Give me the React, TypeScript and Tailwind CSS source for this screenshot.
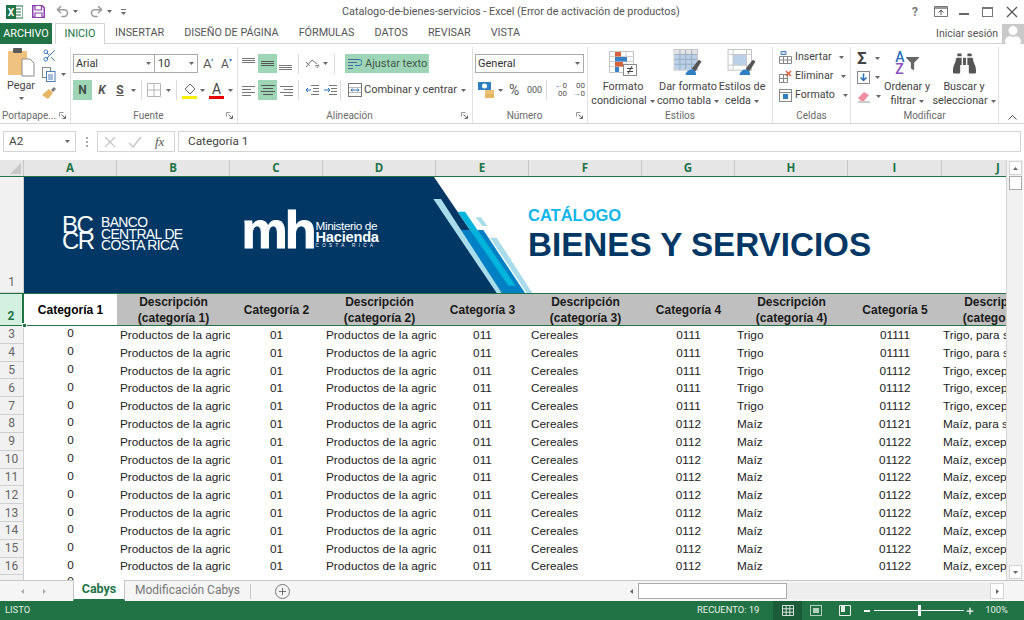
import React from "react";
import { Undo2, Redo2, Scissors, Plus } from "lucide-react";
import { FaBinoculars, FaFilter, FaUser } from "react-icons/fa";

const GRID =
  "grid grid-cols-[24px_93px_113px_93px_113px_93px_113px_93px_113px_94px_113px]";

const Caret = ({ className = "" }: { className?: string }) => (
  <svg width="5" height="3" viewBox="0 0 5 3" className={className}>
    <path d="M0 0h5L2.5 3z" fill="#666" />
  </svg>
);

const Launcher = () => (
  <svg width="7" height="7" viewBox="0 0 7 7">
    <path d="M0.5 0.5h4M0.5 0.5v4" stroke="#999" fill="none" />
    <path d="M2.5 2.5l3.5 3.5M6.5 3.5v3h-3" stroke="#666" fill="none" />
  </svg>
);

const Lines = ({
  w,
  y = [2, 6, 10],
  color = "#777",
}: {
  w: [number, number][];
  y?: number[];
  color?: string;
}) => (
  <svg width="16" height="14" viewBox="0 0 16 14">
    {w.map((l, i) => (
      <rect key={i} x={l[0]} y={y[i]} width={l[1]} height="1" fill={color} />
    ))}
  </svg>
);

const Sep = ({ h = "h-[20px]" }: { h?: string }) => (
  <div className={`w-px bg-[#dcdcdc] ${h}`} />
);

const Group = ({
  label,
  width,
  launcher,
  children,
  labelClass = "",
}: {
  label: string;
  width: string;
  launcher?: boolean;
  children: React.ReactNode;
  labelClass?: string;
}) => (
  <div className={`${width} h-[76px] flex flex-col border-r border-[#e1e1e1] shrink-0`}>
    <div className="h-[61px] shrink-0 flex">{children}</div>
    <div className="flex items-center h-[15px]">
      <div className={`flex-1 text-center text-[10px] text-[#6a6a6a] leading-[15px] whitespace-nowrap ${labelClass}`}>
        {label}
      </div>
      {launcher && (
        <div className="pr-[4px] flex items-center">
          <Launcher />
        </div>
      )}
    </div>
  </div>
);

const BigButton = ({
  icon,
  l1,
  l2,
  width,
}: {
  icon: React.ReactNode;
  l1: string;
  l2: string;
  width: string;
}) => (
  <div className={`${width} flex flex-col items-center shrink-0`}>
    <div className="h-[24px] flex items-end justify-center">{icon}</div>
    <div className="text-[10.8px] leading-[14px] text-[#444] mt-[4px] whitespace-nowrap">{l1}</div>
    <div className="text-[10.8px] leading-[14px] text-[#444] whitespace-nowrap flex items-center gap-[3px]">
      {l2}
      <Caret />
    </div>
  </div>
);

const Brush = () => (
  <g>
    <path d="M20 22l8-10 3 2-7 11z" fill="#555" />
    <path d="M13 29c1-5 5-7 9-6 2 1 3 3 3 6z" fill="#2f7fc4" />
  </g>
);

const CondIcon = () => (
  <svg width="28" height="25" viewBox="0 0 28 25" className="shrink-0">
    <rect x="0.5" y="0.5" width="24" height="21" fill="#fff" stroke="#c4c4c4" />
    <path d="M9 1v21M17 1v21M1 5.5h24M1 10.5h24M1 15.5h24" stroke="#d0d0d0" />
    <rect x="6" y="1" width="6" height="4.5" fill="#d9603a" />
    <rect x="6" y="6" width="12" height="4.5" fill="#3a82c6" />
    <rect x="6" y="11" width="8" height="4.5" fill="#d9603a" />
    <rect x="6" y="16" width="4" height="5" fill="#3a82c6" />
    <rect x="14.5" y="13.5" width="13" height="11" fill="#fff" stroke="#8a8a8a" />
    <path d="M18 17.5h6M18 20.5h6M19 23l4-8" stroke="#444" fill="none" />
  </svg>
);

const TableIcon = () => (
  <svg width="30" height="27" viewBox="0 0 32 30" className="shrink-0">
    <rect x="0.5" y="0.5" width="26" height="23" fill="#fff" stroke="#bdbdbd" />
    <rect x="1" y="6" width="25" height="17" fill="#b9d0e8" />
    <rect x="1" y="1" width="25" height="5" fill="#e4e4e4" />
    <path d="M7 1v22M13.5 1v22M20 1v22M1 6h25M1 11.5h25M1 17h25" stroke="#98a9ba" />
    <Brush />
  </svg>
);

const StyleIcon = () => (
  <svg width="30" height="27" viewBox="0 0 32 30" className="shrink-0">
    <rect x="0.5" y="0.5" width="26" height="23" fill="#fff" stroke="#bdbdbd" />
    <rect x="6" y="6" width="15" height="12" fill="#b9d0e8" />
    <path d="M6 1v22M21 1v22M1 6h25M1 18h25" stroke="#c4c4c4" />
    <Brush />
  </svg>
);

const FontStep = ({ up, size }: { up?: boolean; size: string }) => (
  <div className="w-[11px] flex items-start">
    <span className={`${size} leading-none`}>A</span>
    <svg width="4" height="3" viewBox="0 0 4 3" className="mt-[1px]">
      <path d={up ? "M0 3h4L2 0z" : "M0 0h4L2 3z"} fill="#2a70b8" />
    </svg>
  </div>
);

const Ribbon = () => (
  <div className="h-[80px] flex pt-[3px] pl-0 bg-white border-b border-[#d4d4d4] shrink-0">
    <Group label="Portapape..." width="w-[71px]" launcher labelClass="text-left pl-[2px]">
      <div className="w-[42px] flex flex-col items-center">
        <svg width="27" height="30" viewBox="0 0 27 30" className="mt-[1px] shrink-0">
          <rect x="0" y="3" width="19" height="24" rx="1" fill="#efc27f" />
          <rect x="5" y="0" width="9" height="5" rx="1" fill="#5b5b5b" />
          <path d="M14 11h8l4 4v13H14z" fill="#fff" stroke="#8d8d8d" />
        </svg>
        <div className="text-[10.8px] leading-[13px] text-[#444] mt-[1px]">Pegar</div>
        <Caret className="mt-[5px]" />
      </div>
      <div className="flex flex-col pl-[0px] pt-[1px] gap-[4px]">
        <Scissors size={15} color="#3f7ab5" strokeWidth={1.6} />
        <div className="flex items-center gap-[5px]">
          <svg width="14" height="15" viewBox="0 0 14 15">
            <rect x="0.5" y="0.5" width="8" height="10" fill="#fff" stroke="#888" />
            <rect x="4.5" y="4.5" width="8.5" height="10" fill="#fff" stroke="#4c7fb5" />
            <path d="M6 8h5M6 10h5M6 12h5" stroke="#4c7fb5" />
          </svg>
          <Caret />
        </div>
        <svg width="15" height="14" viewBox="0 0 15 14">
          <path d="M9 4l3-3 2 2-3 3z" fill="#777" />
          <path d="M0 9l7-6 4 4-5 6z" fill="#e5b561" />
        </svg>
      </div>
    </Group>

    <Group label="Fuente" width="w-[167px]" launcher>
      <div className="flex flex-col pl-[2px] pt-[7px]">
        <div className="flex items-center h-[19px]">
          <div className="w-[82px] h-[19px] border border-[#ababab] flex items-center justify-between pl-[2px] pr-[3px] text-[10.9px] text-[#333]">
            <span className="pt-[1px]">Arial</span>
            <Caret />
          </div>
          <div className="w-[43px] h-[19px] border border-l-0 border-[#ababab] flex items-center justify-between pl-[3px] pr-[3px] text-[10.9px] text-[#333]">
            <span className="pt-[1px]">10</span>
            <Caret />
          </div>
          <div className="flex items-end ml-[5px] gap-[7px] text-[#555]">
            <FontStep up size="text-[13px]" />
            <FontStep size="text-[12px]" />
          </div>
        </div>
        <div className="flex items-center h-[20px] mt-[7px] text-[#555]">
          <div className="w-[19px] h-[20px] bg-[#9fd5b7] flex items-center justify-center font-bold text-[12px] text-[#3f4f46]">N</div>
          <div className="w-[18px] ml-[1px] text-center font-bold italic text-[12px]">K</div>
          <div className="w-[18px] text-center font-bold underline text-[12px]">S</div>
          <Caret className="ml-[2px]" />
          <div className="ml-[5px]"><Sep /></div>
          <svg width="14" height="14" viewBox="0 0 14 14" className="ml-[5px]">
            <path d="M.5.5h13v13H.5zM7 .5v13M.5 7h13" stroke="#b5b5b5" fill="none" />
          </svg>
          <Caret className="ml-[5px]" />
          <div className="ml-[5px]"><Sep /></div>
          <svg width="15" height="17" viewBox="0 0 15 17" className="ml-[5px]">
            <path d="M3 7l5-5 5 5-5 5z" fill="#fff" stroke="#666" />
            <rect x="0" y="14" width="15" height="3" fill="#f7f100" />
          </svg>
          <Caret className="ml-[3px]" />
          <svg width="15" height="17" viewBox="0 0 15 17" className="ml-[4px]">
            <rect x="0" y="14" width="15" height="3" fill="#e60000" />
            <text x="7.5" y="12" textAnchor="middle" fontSize="14" fill="#444" fontFamily="Roboto">A</text>
          </svg>
          <Caret className="ml-[4px]" />
        </div>
      </div>
    </Group>

    <Group label="Alineación" width="w-[235px]" launcher>
      <div className="flex flex-col pl-[2px] pt-[7px]">
        <div className="flex items-center h-[19px]">
          <div className="w-[18px] flex justify-center">
            <Lines w={[[1, 13], [1, 13], [1, 13]]} y={[1, 3, 5]} />
          </div>
          <div className="w-[19px] h-[19px] bg-[#9fd5b7] flex items-center justify-center">
            <Lines w={[[1, 13], [1, 13], [1, 13]]} y={[4, 6, 8]} color="#555" />
          </div>
          <div className="w-[18px] flex justify-center">
            <Lines w={[[1, 13], [1, 13], [1, 13]]} y={[8, 10, 12]} />
          </div>
          <div className="ml-[3px]"><Sep /></div>
          <svg width="16" height="14" viewBox="0 0 16 14" className="ml-[5px]">
            <path d="M2 10l6-7 5 4M2 5l4 4M11 9l4-1-2 3" stroke="#777" fill="none" />
          </svg>
          <Caret className="ml-[3px]" />
          <div className="ml-[6px]"><Sep /></div>
          <div className="w-[84px] h-[19px] bg-[#9fd5b7] ml-[10px] flex items-center pl-[3px] gap-[3px] text-[11px] text-[#3f5a4a] whitespace-nowrap">
            <svg width="14" height="12" viewBox="0 0 14 12">
              <path d="M0 1.5h9M0 4.5h9M0 7.5h5M0 10.5h5" stroke="#4a6b9b" />
              <path d="M9 1.5h2a2.5 2.5 0 010 6H7" stroke="#2a70b8" fill="none" />
            </svg>
            <span className="pt-[1px]">Ajustar texto</span>
          </div>
        </div>
        <div className="flex items-center h-[20px] mt-[7px]">
          <div className="w-[18px] flex justify-center">
            <Lines w={[[1, 13], [1, 9], [1, 13], [1, 9]]} y={[3, 6, 9, 12]} />
          </div>
          <div className="w-[19px] h-[20px] bg-[#9fd5b7] flex items-center justify-center">
            <Lines w={[[1, 14], [3, 10], [1, 14], [3, 10]]} y={[2, 5, 8, 11]} color="#555" />
          </div>
          <div className="w-[18px] flex justify-center">
            <Lines w={[[2, 13], [6, 9], [2, 13], [6, 9]]} y={[3, 6, 9, 12]} />
          </div>
          <div className="ml-[3px]"><Sep /></div>
          <svg width="14" height="12" viewBox="0 0 14 12" className="ml-[6px]">
            <path d="M6 1.5h8M8 4.5h6M8 7.5h6M6 10.5h8" stroke="#777" />
            <path d="M6 6H1M3 4L1 6l2 2" stroke="#2a70b8" fill="none" />
          </svg>
          <svg width="14" height="12" viewBox="0 0 14 12" className="ml-[4px]">
            <path d="M6 1.5h8M8 4.5h6M8 7.5h6M6 10.5h8" stroke="#777" />
            <path d="M1 6h6M5 4l2 2-2 2" stroke="#2a70b8" fill="none" />
          </svg>
          <div className="ml-[3px]"><Sep /></div>
          <svg width="14" height="14" viewBox="0 0 14 14" className="ml-[7px]">
            <rect x=".5" y=".5" width="13" height="13" fill="#fff" stroke="#777" />
            <path d="M1 4.5h12M1 9.5h12" stroke="#bbb" />
            <path d="M3 7h8M4.5 5.5L3 7l1.5 1.5M9.5 5.5L11 7 9.5 8.5" stroke="#2a70b8" fill="none" />
          </svg>
          <span className="ml-[2px] w-[92px] text-[11px] text-[#444] whitespace-nowrap">Combinar y centrar</span>
          <Caret className="ml-[5px]" />
        </div>
      </div>
    </Group>

    <Group label="Número" width="w-[115px]" launcher>
      <div className="flex flex-col pl-[2px] pt-[7px]">
        <div className="w-[109px] h-[19px] border border-[#ababab] flex items-center justify-between pl-[2px] pr-[3px] text-[11px] text-[#333]">
          <span className="pt-[1px]">General</span>
          <Caret />
        </div>
        <div className="flex items-center h-[20px] mt-[7px] text-[#555]">
          <svg width="16" height="16" viewBox="0 0 16 16" className="ml-[3px]">
            <rect x="0" y="0" width="13" height="8" fill="#2f7fc4" />
            <circle cx="6.5" cy="4" r="2.5" fill="#fff" />
            <rect x="7" y="8" width="9" height="4" fill="#f0c277" />
            <rect x="7" y="12" width="9" height="4" fill="#e5b561" />
          </svg>
          <Caret className="ml-[4px]" />
          <span className="ml-[6px] w-[13px] text-[14px] leading-none">%</span>
          <span className="ml-[5px] w-[14px] text-[9px] leading-none">000</span>
          <div className="ml-[5px]"><Sep /></div>
          <div className="ml-[6px] w-[14px] text-[8px] leading-[8px] flex flex-col items-end shrink-0">
            <span><span className="text-[#2a70b8]">←</span>0</span>
            <span>00</span>
          </div>
          <div className="ml-[4px] w-[14px] text-[8px] leading-[8px] flex flex-col items-end shrink-0">
            <span>00</span>
            <span><span className="text-[#2a70b8]">→</span>0</span>
          </div>
        </div>
      </div>
    </Group>

    <Group label="Estilos" width="w-[185px]">
      <div className="flex pt-[5px]">
        <BigButton icon={<CondIcon />} l1="Formato" l2="condicional" width="w-[70px]" />
        <BigButton icon={<TableIcon />} l1="Dar formato" l2="como tabla" width="w-[60px]" />
        <BigButton icon={<StyleIcon />} l1="Estilos de" l2="celda" width="w-[48px]" />
      </div>
    </Group>

    <Group label="Celdas" width="w-[78px]">
      <div className="flex flex-col pl-[6px] pt-[3px] gap-[5px] text-[10.6px] text-[#444] leading-[14px]">
        <div className="flex items-center gap-[3px]">
          <svg width="13" height="13" viewBox="0 0 13 13">
            <path d="M.5 5.5h12v7H.5zM4.5 5.5v7M8.5 5.5v7M.5 9h12" stroke="#888" fill="#fff" />
            <path d="M2 .5h5v3H2z" fill="#cfe0f2" stroke="#4c7fb5" />
          </svg>
          Insertar
          <Caret className="ml-[5px]" />
        </div>
        <div className="flex items-center gap-[3px]">
          <svg width="13" height="13" viewBox="0 0 13 13">
            <path d="M.5 4.5h8v8h-8zM4.5 4.5v8M.5 8.5h8" stroke="#888" fill="#fff" />
            <path d="M7 1l5 5M12 1L7 6" stroke="#d9603a" strokeWidth="1.6" />
          </svg>
          Eliminar
          <Caret className="ml-[5px]" />
        </div>
        <div className="flex items-center gap-[3px]">
          <svg width="13" height="13" viewBox="0 0 13 13">
            <rect x=".5" y=".5" width="12" height="12" fill="#fff" stroke="#888" />
            <path d="M1 3.5h11" stroke="#888" />
            <rect x="4" y="5" width="5" height="5" fill="#2f7fc4" />
          </svg>
          Formato
          <Caret className="ml-[5px]" />
        </div>
      </div>
    </Group>

    <Group label="Modificar" width="w-[148px]">
      <div className="flex flex-col pl-[6px] pt-[1px] shrink-0">
        <div className="flex items-center gap-[5px] h-[20px]">
          <span className="text-[17px] leading-none text-[#444] w-[13px] font-bold">Σ</span>
          <Caret />
        </div>
        <div className="flex items-center gap-[5px] h-[19px]">
          <svg width="13" height="13" viewBox="0 0 13 13">
            <rect x=".5" y=".5" width="12" height="12" fill="#fff" stroke="#888" />
            <path d="M6.5 2.5v7M3.5 6.5l3 3 3-3" stroke="#2a70b8" strokeWidth="1.5" fill="none" />
          </svg>
          <Caret />
        </div>
        <div className="flex items-center gap-[5px] h-[19px]">
          <svg width="14" height="12" viewBox="0 0 14 12">
            <path d="M1 7l6-6 5 3-5 6H4z" fill="#ef8fa0" />
            <path d="M1 11h12" stroke="#999" />
          </svg>
          <Caret />
        </div>
      </div>
      <div className="flex pt-[5px] ml-[-1px]">
        <BigButton
          width="w-[54px]"
          l1="Ordenar y"
          l2="filtrar"
          icon={
            <div className="flex items-center gap-[1px] pb-[1px]">
              <div className="flex flex-col text-[14px] leading-[12px] font-medium">
                <span className="text-[#2a70b8]">A</span>
                <span className="text-[#8a4fc0]">Z</span>
              </div>
              <FaFilter size={13} color="#666" />
            </div>
          }
        />
        <BigButton
          width="w-[60px]"
          l1="Buscar y"
          l2="seleccionar"
          icon={<FaBinoculars size={23} color="#555" className="mb-[1px] shrink-0" />}
        />
      </div>
    </Group>
    <div className="flex-1 flex items-end justify-end pr-[7px] pb-[3px]">
      <svg width="9" height="5" viewBox="0 0 9 5">
        <path d="M.5 4.5l4-4 4 4" stroke="#555" fill="none" />
      </svg>
    </div>
  </div>
);

const ColHead = ({ c }: { c: string }) => (
  <div className="h-[16px] flex items-center justify-center border-r border-[#c6c6c6] text-[11.5px] font-bold text-[#217346] leading-none bg-[#e6e6e6] font-['Open_Sans',sans-serif]">
    {c}
  </div>
);

const HeadCell = ({ one, two, white }: { one?: string; two?: [string, string]; white?: boolean }) => (
  <div
    className={`flex flex-col items-center justify-center text-[12px] font-bold leading-[16px] text-[#1a1a1a] overflow-hidden whitespace-nowrap mb-[1px] ${
      white ? "bg-white text-black" : "bg-[#bfbfbf]"
    }`}
  >
    {one ?? (
      <>
        <span>{two![0]}</span>
        <span>{two![1]}</span>
      </>
    )}
  </div>
);

const rows = Array.from({ length: 14 }, (_, i) => {
  const n = i + 3;
  const trigo = n <= 7;
  return {
    n,
    g: trigo ? "0111" : "0112",
    h: trigo ? "Trigo" : "Maíz",
    i: n <= 4 ? "01111" : trigo ? "01112" : n === 8 ? "01121" : "01122",
    j: n <= 4 ? "Trigo, para semilla" : trigo ? "Trigo, excepto" : n === 8 ? "Maíz, para semilla" : "Maíz, excepto",
  };
});

const Desc = ({ t, pl = "pl-[3px]" }: { t: string; pl?: string }) => (
  <div className={`${pl} overflow-hidden whitespace-nowrap`}>{t}</div>
);

const Row = ({ r }: { r: (typeof rows)[number] }) => (
  <div className={`${GRID} h-[17.82px] items-center text-[11.8px] leading-[14px] text-[#222] font-['Liberation_Sans',Arial,sans-serif]`}>
    <div className="h-full flex items-center justify-center bg-[#f1f1f1] border-r border-b border-[#d0d0d0] text-[12px] text-[#666] font-['Roboto',sans-serif]">
      {r.n}
    </div>
    <div className="text-center pb-[3px]">0</div>
    <Desc t="Productos de la agric" />
    <div className="text-center">01</div>
    <Desc t="Productos de la agric" />
    <div className="text-center">011</div>
    <Desc t="Cereales" pl="pl-[2px]" />
    <div className="text-center">{r.g}</div>
    <Desc t={r.h} pl="pl-[2px]" />
    <div className="text-center">{r.i}</div>
    <Desc t={r.j} pl="pl-[1px]" />
  </div>
);

const Banner = () => (
  <div className={`${GRID} h-[116px]`}>
    <div className="flex items-end justify-center pb-[1px] bg-[#f1f1f1] border-r border-b border-[#d0d0d0] text-[12px] text-[#666]">
      1
    </div>
    <div className="col-span-10 flex overflow-hidden bg-white">
      <div className="w-[401px] shrink-0 bg-[#003764] text-white flex items-start pt-[34px] pl-[38px] font-['Liberation_Sans',Arial,sans-serif]">
        <div className="text-[24px] leading-[16px] tracking-[-1.6px] font-light mt-[6px] w-[39px]">
          <div>BC</div>
          <div>CR</div>
        </div>
        <div className="text-[13.9px] leading-[11.5px] tracking-[-0.6px] whitespace-nowrap mt-[6px]">
          <div>BANCO</div>
          <div>CENTRAL DE</div>
          <div>COSTA RICA</div>
        </div>
        <div className="ml-[59px] text-[52px] leading-[36px] font-bold tracking-[-3px] w-[74px] mt-[1px] [-webkit-text-stroke:1px_white]">mh</div>
        <div className="flex flex-col whitespace-nowrap mt-[10px]">
          <span className="text-[11.8px] leading-[11px] tracking-[-0.4px] font-light">Ministerio de</span>
          <span className="text-[14.6px] leading-[11px] font-bold tracking-[-0.2px]">Hacienda</span>
          <span className="text-[4.5px] leading-[6px] tracking-[3.4px]">COSTA RICA</span>
        </div>
      </div>
      <svg width="110" height="116" viewBox="0 6 330 348" className="shrink-0">
        <path d="M0 6h27l108 159h-35l132 189H0z" fill="#003764" />
        <path d="M100 165h75l125 189h-68z" fill="#0080c4" />
        <path d="M25 72h23l182 282h-15z" fill="#a9dcea" />
        <path d="M98 110h22l152 222h-22z" fill="#00b4dc" />
        <path d="M152 127h16l19 26h-15z" fill="#a9dcea" />
        <path d="M195 188h20l107 166h-17z" fill="#a9dcea" />
      </svg>
      <div className="ml-[-7px] pt-[29px] font-['Liberation_Sans',Arial,sans-serif] font-bold whitespace-nowrap">
        <div className="text-[16.5px] leading-[19px] text-[#10b5ea]">CATÁLOGO</div>
        <div className="text-[33.2px] leading-[40px] text-[#003764]">BIENES Y SERVICIOS</div>
      </div>
    </div>
  </div>
);

const HeaderRow = () => (
  <div className={`${GRID} h-[33px] font-['Liberation_Sans',Arial,sans-serif] border-t border-[#217346] relative`}>
    <div className="flex items-end justify-center pb-[1px] bg-[#d3f0e0] border-r-2 border-[#217346] text-[12px] font-bold text-[#217346] font-['Roboto',sans-serif]">
      2
    </div>
    <HeadCell one="Categoría 1" white />
    <HeadCell two={["Descripción", "(categoría 1)"]} />
    <HeadCell one="Categoría 2" />
    <HeadCell two={["Descripción", "(categoría 2)"]} />
    <HeadCell one="Categoría 3" />
    <HeadCell two={["Descripción", "(categoría 3)"]} />
    <HeadCell one="Categoría 4" />
    <HeadCell two={["Descripción", "(categoría 4)"]} />
    <HeadCell one="Categoría 5" />
    <HeadCell two={["Descripción", "(categoría 5)"]} />
    <div className="absolute left-0 right-0 bottom-0 h-px bg-[#217346]" />
    <div className="absolute left-[22px] bottom-[-2px] w-[5px] h-[5px] bg-[#217346] border border-white" />
  </div>
);

export default function App() {
  return (
    <div className="w-[1024px] h-[620px] overflow-hidden flex flex-col bg-white font-['Roboto',sans-serif] text-[#444]">
      {/* Title bar */}
      <div className="h-[23px] flex items-center shrink-0">
        <svg width="17" height="16" viewBox="0 0 17 16" className="ml-[6px]">
          <path d="M8 2h9v12H8z" fill="#fff" stroke="#217346" />
          <path d="M10 5h5M10 8h5M10 11h5" stroke="#217346" />
          <rect x="0" y="1" width="10" height="14" fill="#217346" />
          <text x="5" y="12" textAnchor="middle" fontSize="10" fontWeight="700" fill="#fff" fontFamily="Roboto">X</text>
        </svg>
        <svg width="13" height="13" viewBox="0 0 13 13" className="ml-[9px]">
          <path d="M.75.75h9.5l2 2v9.5H.75z" fill="#fff" stroke="#8a3fae" strokeWidth="1.5" />
          <path d="M3 1v4h6.5V1M3 12V8h7v4" fill="#fff" stroke="#8a3fae" strokeWidth="1.2" />
        </svg>
        <Undo2 size={15} color="#9b9b9b" strokeWidth={2.4} className="ml-[10px]" />
        <Caret className="ml-[3px]" />
        <Redo2 size={15} color="#9b9b9b" strokeWidth={2.4} className="ml-[11px]" />
        <Caret className="ml-[3px]" />
        <div className="ml-[9px] flex flex-col items-center gap-[2px]">
          <div className="w-[5px] h-px bg-[#777]" />
          <Caret />
        </div>
        <div className="ml-[216px] pt-[2px] text-[10.8px] text-[#555] whitespace-nowrap">
          Catalogo-de-bienes-servicios - Excel (Error de activación de productos)
        </div>
        <div className="flex-1" />
        <span className="text-[12px] font-bold text-[#777] w-[10px] text-center">?</span>
        <svg width="14" height="11" viewBox="0 0 14 11" className="ml-[14px]">
          <path d="M.5.5h13v10H.5z" fill="#fff" stroke="#777" />
          <path d="M1 1h12v2H1z" fill="#999" />
          <path d="M7 9V4.5M4.5 6.5L7 4l2.5 2.5" stroke="#555" fill="none" />
        </svg>
        <div className="w-[10px] h-[2px] bg-[#666] ml-[11px] mt-[5px]" />
        <div className="w-[11px] h-[10px] border border-[#777] border-t-2 ml-[13px]" />
        <svg width="12" height="12" viewBox="0 0 12 12" className="ml-[13px] mr-[6px]">
          <path d="M1 1l10 10M11 1L1 11" stroke="#555" strokeWidth="1.3" />
        </svg>
      </div>

      {/* Tabs */}
      <div className="h-[21px] flex shrink-0 items-stretch text-[10.8px] text-[#555]">
        <div className="w-[52px] bg-[#217346] text-white flex items-center justify-center pt-[1px]">ARCHIVO</div>
        <div className="w-[50px] ml-[3px] border border-b-0 border-[#d4d4d4] text-[#217346] flex items-center justify-center pt-[1px]">INICIO</div>
        <div className="flex-1 flex items-center gap-[20px] pl-[10px] pt-[1px] border-b border-[#d4d4d4] whitespace-nowrap">
          <span>INSERTAR</span>
          <span>DISEÑO DE PÁGINA</span>
          <span>FÓRMULAS</span>
          <span>DATOS</span>
          <span>REVISAR</span>
          <span>VISTA</span>
          <div className="flex-1" />
          <span className="text-[10.5px]">Iniciar sesión</span>
          <div className="w-[22px] h-[20px] -ml-[16px] bg-[#c9c9c9] flex items-end justify-center overflow-hidden">
            <FaUser size={18} color="#fff" />
          </div>
        </div>
      </div>

      <Ribbon />

      {/* Formula bar */}
      <div className="h-[36px] flex items-start shrink-0 pt-[7px] bg-white text-[11.8px] text-[#444]">
        <div className="ml-[3px] w-[73px] h-[21px] border border-[#d4d4d4] flex items-center justify-between pl-[5px] pr-[5px]">
          A2
          <Caret />
        </div>
        <div className="ml-[9px] w-[3px] h-[21px] flex flex-col items-center justify-center gap-[2px]">
          <div className="w-[2px] h-[2px] bg-[#aaa]" />
          <div className="w-[2px] h-[2px] bg-[#aaa]" />
          <div className="w-[2px] h-[2px] bg-[#aaa]" />
        </div>
        <div className="ml-[9px] w-[78px] h-[21px] border border-[#d4d4d4] flex items-center pl-[6px]">
          <svg width="12" height="12" viewBox="0 0 12 12">
            <path d="M1 1l10 10M11 1L1 11" stroke="#c4c4c4" strokeWidth="1.2" />
          </svg>
          <svg width="14" height="12" viewBox="0 0 14 12" className="ml-[12px]">
            <path d="M1 7l4 4 8-10" stroke="#c4c4c4" strokeWidth="1.3" fill="none" />
          </svg>
          <span className="ml-[13px] font-['Liberation_Serif',serif] italic text-[13px] text-[#555]">fx</span>
        </div>
        <div className="ml-[3px] flex-1 mr-[3px] h-[21px] border border-[#d4d4d4] flex items-center pl-[9px]">
          Categoría 1
        </div>
      </div>

      {/* Sheet */}
      <div className="flex-1 flex min-h-0">
        <div className="w-[1007px] overflow-hidden border-r border-[#d4d4d4]">
          <div className={`${GRID} h-[17px] border-b border-[#217346]`}>
            <div className="bg-[#e6e6e6] flex items-end justify-end pr-[2px] pb-[2px] border-r border-[#c6c6c6]">
              <svg width="11" height="11" viewBox="0 0 11 11">
                <path d="M11 0v11H0z" fill="#c8c8c8" />
              </svg>
            </div>
            {["A", "B", "C", "D", "E", "F", "G", "H", "I", "J"].map((c) => (
              <ColHead key={c} c={c} />
            ))}
          </div>
          <Banner />
          <HeaderRow />
          {rows.map((r) => (
            <Row key={r.n} r={r} />
          ))}
          <div className={`${GRID} h-[20px] text-[11.8px] leading-[14px] font-['Liberation_Sans',Arial,sans-serif] text-[#222]`}>
            <div className="bg-[#f1f1f1] border-r border-[#d0d0d0]" />
            <div className="text-center mt-[-1px]">0</div>
          </div>
        </div>
        <div className="w-[16px] bg-[#f1f1f1] flex flex-col items-center pt-[1px] pb-[1px]">
          <div className="w-[13px] h-[14px] bg-white border border-[#d4d4d4] flex items-center justify-center">
            <Caret className="rotate-180" />
          </div>
          <div className="w-[13px] h-[14px] bg-white border border-[#ababab] mt-[1px]" />
          <div className="flex-1" />
          <div className="w-[13px] h-[14px] bg-white border border-[#d4d4d4] flex items-center justify-center">
            <Caret />
          </div>
        </div>
      </div>

      {/* Sheet tabs */}
      <div className="h-[21px] shrink-0 flex items-stretch border-t border-[#c6c6c6] bg-[#f5f5f5]">
        <div className="w-[73px] flex items-center pl-[20px] gap-[17px]">
          <Caret className="rotate-90 opacity-50" />
          <Caret className="-rotate-90 opacity-50" />
        </div>
        <div className="w-[52px] mt-[-1px] bg-white border-x border-[#c6c6c6] border-b-2 border-b-[#217346] text-[#217346] font-bold text-[12.5px] flex items-center justify-center">
          Cabys
        </div>
        <div className="ml-[10px] text-[12px] text-[#777] flex items-center pb-[3px] whitespace-nowrap w-[105px]">
          Modificación Cabys
        </div>
        <div className="ml-[10px] mt-[3px] w-px h-[15px] bg-[#c6c6c6]" />
        <div className="ml-[24px] w-[15px] h-[15px] mt-[3px] rounded-full border border-[#777] flex items-center justify-center">
          <Plus size={11} color="#666" />
        </div>
        <div className="w-[334px] shrink-0" />
        <div className="w-[14px] flex items-center justify-center">
          <Caret className="rotate-90" />
        </div>
        <div className="w-[149px] h-[16px] mt-[2px] bg-white border border-[#ababab]" />
        <div className="w-[203px] mt-[2px] h-[16px] bg-[#eeeeee]" />
        <div className="w-[14px] h-[16px] mt-[2px] bg-white border border-[#d4d4d4] flex items-center justify-center">
          <Caret className="-rotate-90" />
        </div>
      </div>

      {/* Status bar */}
      <div className="h-[19px] shrink-0 bg-[#217346] flex items-center text-[9.4px] text-[#e4efe8]">
        <span className="ml-[5px]">LISTO</span>
        <div className="flex-1" />
        <span className="whitespace-nowrap">RECUENTO: 19</span>
        <div className="ml-[14px] w-[29px] h-[19px] bg-[#1a5c38] flex items-center justify-center">
          <svg width="12" height="11" viewBox="0 0 12 11">
            <path d="M.5.5h11v10H.5zM4.2.5v10M7.8.5v10M.5 3.8h11M.5 7.2h11" stroke="#fff" fill="none" strokeWidth=".8" />
          </svg>
        </div>
        <svg width="12" height="11" viewBox="0 0 12 11" className="ml-[8px]">
          <rect x=".5" y=".5" width="11" height="10" fill="none" stroke="#b5d0c0" />
          <rect x="3" y="3" width="6" height="5" fill="#b5d0c0" />
        </svg>
        <svg width="12" height="11" viewBox="0 0 12 11" className="ml-[17px]">
          <path d="M.5.5h11v10H.5z" fill="none" stroke="#e4efe8" />
          <path d="M2 1h4v6H2z" fill="#e4efe8" />
        </svg>
        <div className="ml-[13px] w-[6px] h-[2px] bg-white" />
        <div className="ml-[4px] w-[90px] h-px bg-white flex items-center justify-center">
          <div className="w-[3px] h-[11px] bg-white" />
        </div>
        <Plus size={10} color="#fff" strokeWidth={3} className="ml-[1px]" />
        <span className="ml-[10px] mr-[16px]">100%</span>
      </div>
    </div>
  );
}
